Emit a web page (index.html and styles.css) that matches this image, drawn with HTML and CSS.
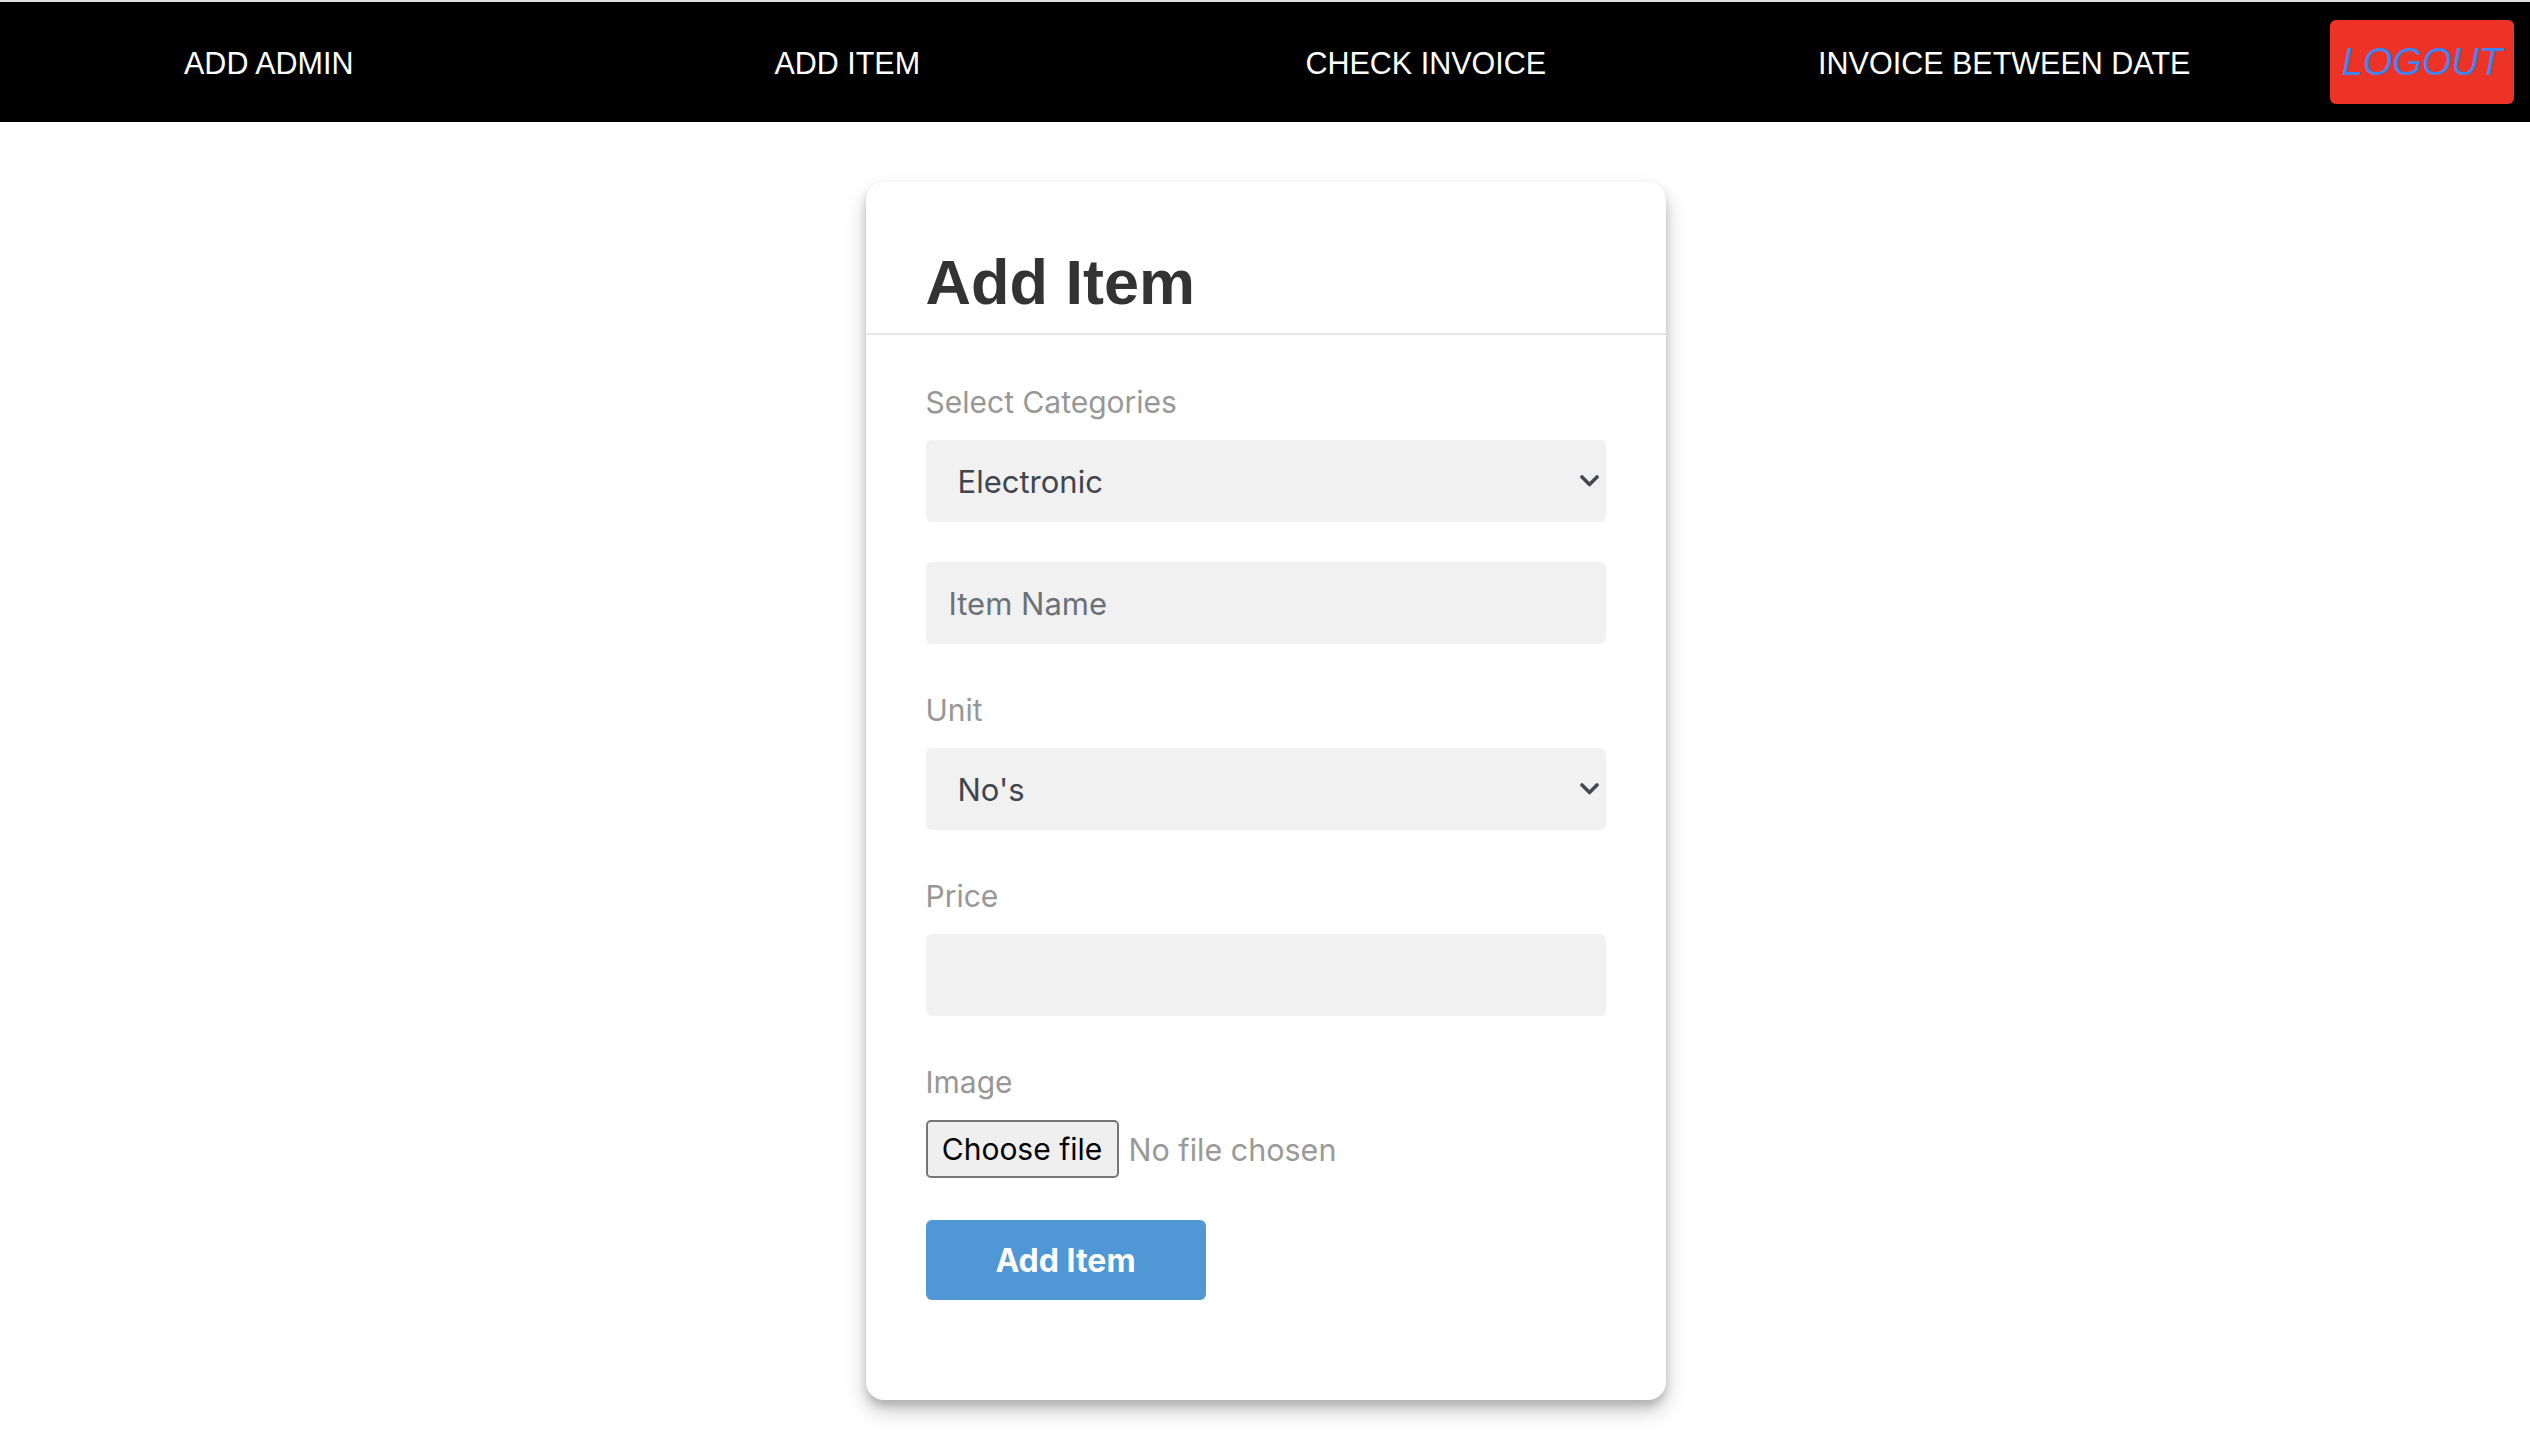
FILE: index.html
```html
<!DOCTYPE html>
<html lang="en">
<head>
<meta charset="utf-8">
<title>Add Item</title>
<link rel="stylesheet" href="styles.css">
</head>
<body>
<nav class="topnav">
  <div class="nav-links">
    <a class="nav-link" href="#">ADD ADMIN</a>
    <a class="nav-link" href="#">ADD ITEM</a>
    <a class="nav-link" href="#">CHECK INVOICE</a>
    <a class="nav-link" href="#">INVOICE BETWEEN DATE</a>
  </div>
  <a class="logout" href="#">LOGOUT</a>
</nav>

<main class="page">
  <section class="card">
    <header class="card-header">
      <h1 class="card-title">Add Item</h1>
    </header>
    <form class="card-body">
      <label class="field-label" for="cat">Select Categories</label>
      <div class="select-wrap field">
        <select id="cat" class="control select">
          <option>Electronic</option>
          <option>Furniture</option>
        </select>
        <svg class="chevron" width="19" height="12" viewBox="0 0 19 12"><polyline points="2,2 9.5,9.5 17,2" fill="none" stroke="#454a52" stroke-width="3.6" stroke-linecap="round" stroke-linejoin="round"/></svg>
      </div>

      <input class="control input field" type="text" placeholder="Item Name">

      <label class="field-label" for="unit">Unit</label>
      <div class="select-wrap field">
        <select id="unit" class="control select">
          <option>No's</option>
          <option>Kg</option>
        </select>
        <svg class="chevron" width="19" height="12" viewBox="0 0 19 12"><polyline points="2,2 9.5,9.5 17,2" fill="none" stroke="#454a52" stroke-width="3.6" stroke-linecap="round" stroke-linejoin="round"/></svg>
      </div>

      <label class="field-label" for="price">Price</label>
      <input id="price" class="control input field" type="text">

      <label class="field-label">Image</label>
      <div class="file-row">
        <label class="file-btn">Choose file<input class="file-input" type="file"></label>
        <span class="file-name">No file chosen</span>
      </div>

      <button class="submit" type="button">Add Item</button>
    </form>
  </section>
</main>
</body>
</html>
```

FILE: styles.css
```css
* { box-sizing: border-box; }

html, body {
  margin: 0;
  padding: 0;
  background: #ffffff;
}

body {
  border-top: 2px solid #dedede;
  font-family: "Liberation Sans", Arial, sans-serif;
}

.topnav {
  display: flex;
  align-items: center;
  height: 120px;
  background: #000000;
  padding-right: 16px;
}

.nav-links {
  flex: 1;
  display: flex;
  padding-top: 1px;
}

.nav-link {
  flex: 1;
  padding-right: 41px;
  text-align: center;
  color: #ffffff;
  text-decoration: none;
  font-family: "Liberation Sans", Arial, sans-serif;
  font-size: 30.5px;
  line-height: 40px;
}

.logout {
  width: 184px;
  height: 84px;
  margin-left: 16px;
  display: flex;
  align-items: center;
  justify-content: center;
  background: #ed3325;
  border-radius: 6px;
  color: #3d84f4;
  font-style: italic;
  font-size: 38px;
  text-decoration: none;
  font-family: "Liberation Sans", Arial, sans-serif;
}

.page {
  display: flex;
  justify-content: center;
  padding: 60px 0 44px 1px;
}

.card {
  width: 800px;
  background: #ffffff;
  border-radius: 18px;
  box-shadow: 0 11px 22px rgba(0,0,0,0.2), 0 6px 8px rgba(0,0,0,0.17);
}

.card-header {
  padding: 63px 60px 14px;
  border-bottom: 2px solid #e6e6e6;
}

.card-title {
  margin: 0;
  font-family: "Liberation Sans", Arial, sans-serif;
  font-weight: 700;
  font-size: 63px;
  line-height: 74px;
  color: #333333;
}

.card-body {
  display: flex;
  flex-direction: column;
  align-items: stretch;
  padding: 41px 60px 100px;
  font-family: Inter, "Noto Sans", sans-serif;
}

.field-label {
  display: block;
  margin: 6px 0 18px;
  font-size: 30px;
  line-height: 40px;
  color: #979797;
}

.field {
  margin-bottom: 40px;
}

.control {
  display: block;
  width: 100%;
  height: 82px;
  border: none;
  border-radius: 6px;
  background: #f1f1f1;
  font-family: Inter, "Noto Sans", sans-serif;
  font-size: 31px;
  outline: none;
}

.select-wrap {
  position: relative;
}

.select {
  appearance: none;
  -webkit-appearance: none;
  padding: 0 40px 0 32px;
  color: #41464e;
}

.chevron {
  position: absolute;
  right: 7px;
  top: 35px;
  pointer-events: none;
}

.input {
  padding: 0 23px;
  color: #41464e;
}

.input::placeholder {
  color: #6c7179;
  opacity: 1;
}

.file-row {
  display: flex;
  align-items: center;
  gap: 10px;
  margin-bottom: 42px;
}

.file-btn {
  display: flex;
  align-items: center;
  justify-content: center;
  width: 193px;
  height: 58px;
  border: 2px solid #767676;
  border-radius: 5px;
  background: #efefef;
  color: #000000;
  font-size: 30px;
}

.file-input {
  display: none;
}

.file-name {
  font-size: 30.5px;
  color: #999999;
}

.submit {
  align-self: flex-start;
  width: 280px;
  height: 80px;
  border: none;
  border-radius: 6px;
  background: #5097d6;
  color: #ffffff;
  font-family: Inter, "Noto Sans", sans-serif;
  font-weight: 700;
  font-size: 32px;
}
```
